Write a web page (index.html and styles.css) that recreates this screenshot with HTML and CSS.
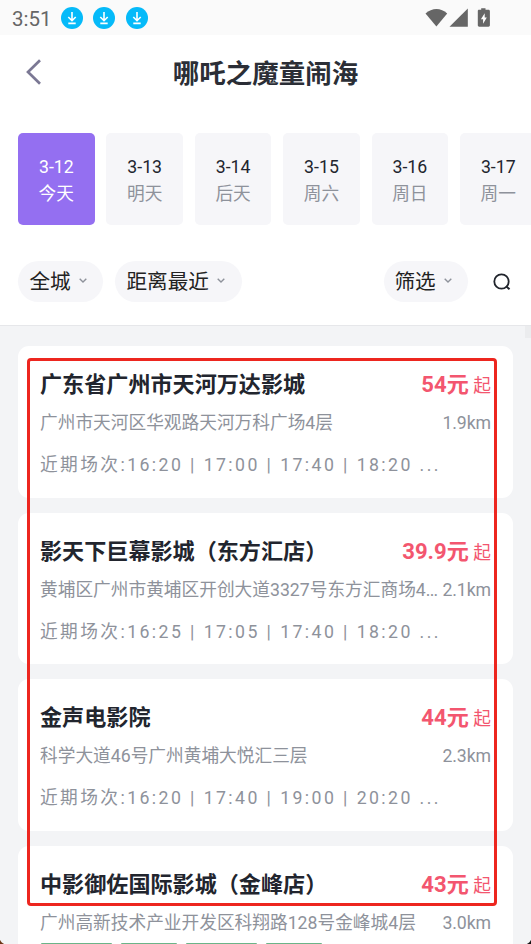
FILE: index.html
```
<!DOCTYPE html>
<html lang="zh-CN">
<head>
<meta charset="utf-8">
<title>哪吒之魔童闹海</title>
<link rel="stylesheet" href="styles.css">
</head>
<body>
<svg class="defs" width="0" height="0">
  <symbol id="download" viewBox="0 0 22 22"><circle cx="11" cy="11" r="11" fill="#05baf9"/><path d="M11 5v8.6M7.3 10l3.7 3.7 3.7-3.7M7.3 16.4h7.4" fill="none" stroke="#fff" stroke-width="1.6"/></symbol>
  <symbol id="chevron" viewBox="0 0 8 5"><path d="M.7.7 4 3.9 7.3.7" fill="none" stroke="#8e929b" stroke-width="1.4"/></symbol>
</svg>
<div class="screen">
  <header class="status">
    <span class="clock">3:51</span>
    <svg class="dl"><use href="#download"/></svg>
    <svg class="dl"><use href="#download"/></svg>
    <svg class="dl"><use href="#download"/></svg>
    <svg class="signals" viewBox="0 0 66 20"><g fill="#666"><path d="M.5 5.6C7-.6 16-.6 22.200 5.6L11.400 18.600z"/><path d="M42.800 .4v18.300H24.500z"/><path d="M53.800 1.800h2.400V.2h4.300v1.600h3c.8 0 1.400.6 1.400 1.400v14.100c0 .8-.6 1.400-1.400 1.400H54.200c-.8 0-1.400-.6-1.400-1.400V3.200c0-.8.400-1.400 1-1.400z"/></g><path d="M59.700 5.200 55.900 11.300h2.200v4.500l3.700-6.400h-2.100z" fill="#fff"/></svg>
  </header>
  <nav class="titlebar">
    <svg class="back" viewBox="0 0 16 26"><path d="M14 1.200 2 13l12 11.800" fill="none" stroke="#7b7894" stroke-width="2.700"/></svg>
    <h1>哪吒之魔童闹海</h1>
  </nav>
  <div class="dates">
    <div class="date active"><b>3-12</b><span>今天</span></div>
    <div class="date"><b>3-13</b><span>明天</span></div>
    <div class="date"><b>3-14</b><span>后天</span></div>
    <div class="date"><b>3-15</b><span>周六</span></div>
    <div class="date"><b>3-16</b><span>周日</span></div>
    <div class="date"><b>3-17</b><span>周一</span></div>
  </div>
  <div class="filters">
    <div class="pill city">全城<svg><use href="#chevron"/></svg></div>
    <div class="pill sort">距离最近<svg><use href="#chevron"/></svg></div>
    <div class="pill choose">筛选<svg><use href="#chevron"/></svg></div>
    <svg class="search" viewBox="0 0 18 18"><circle cx="8.500" cy="8.500" r="7.200" fill="none" stroke="#20242c" stroke-width="1.800"/><path d="m13.200 13.200 3.300 3.100" stroke="#20242c" stroke-width="2"/></svg>
  </div>
  <main class="list">
    <article class="card">
      <div class="row head"><h2>广东省广州市天河万达影城</h2><p class="price">54元<small>起</small></p></div>
      <div class="row addr"><span>广州市天河区华观路天河万科广场4层</span><span class="km">1.9km</span></div>
      <p class="times">近期场次:16:20 | 17:00 | 17:40 | 18:20 ...</p>
    </article>
    <article class="card">
      <div class="row head"><h2>影天下巨幕影城（东方汇店）</h2><p class="price">39.9元<small>起</small></p></div>
      <div class="row addr"><span>黄埔区广州市黄埔区开创大道3327号东方汇商场4<span class="dots">...</span></span><span class="km">2.1km</span></div>
      <p class="times">近期场次:16:25 | 17:05 | 17:40 | 18:20 ...</p>
    </article>
    <article class="card">
      <div class="row head"><h2>金声电影院</h2><p class="price">44元<small>起</small></p></div>
      <div class="row addr"><span>科学大道46号广州黄埔大悦汇三层</span><span class="km">2.3km</span></div>
      <p class="times">近期场次:16:20 | 17:40 | 19:00 | 20:20 ...</p>
    </article>
    <article class="card">
      <div class="row head"><h2>中影御佐国际影城（金峰店）</h2><p class="price">43元<small>起</small></p></div>
      <div class="row addr"><span>广州高新技术产业开发区科翔路128号金峰城4层</span><span class="km">3.0km</span></div>
      <div class="tags"><i class="wide"></i><i></i><i class="wide"></i><i></i></div>
    </article>
  </main>
  <div class="scroll"></div>
  <div class="outline"></div>
  <div class="corner left"></div>
  <div class="corner right"></div>
</div>
</body>
</html>
```
FILE: styles.css
```
* { box-sizing: border-box; margin: 0; padding: 0; }
body { background: #fff; font-family: Roboto, "Noto Sans CJK SC", sans-serif; }
.defs { position: absolute; }
.screen { position: relative; width: 531px; height: 944px; overflow: hidden; display: flex; flex-direction: column; }
.status { height: 35px; flex: none; background: #fafafa; display: flex; align-items: center; padding: 0 40px 0 12px; }
.clock { width: 48.500px; font-size: 20.500px; line-height: 36px; color: #666; padding-top: 2px; }
.dl { width: 22px; height: 22px; margin-right: 10.500px; }
.signals { width: 66px; height: 20px; margin-left: auto; }
.titlebar { height: 98px; flex: none; display: grid; grid-template-columns: 60px 1fr 60px; padding-top: 19px; align-items: start; }
.back { width: 16px; height: 26px; margin: 5px 0 0 26px; }
h1 { text-align: center; font-size: 26.500px; line-height: 40px; font-weight: 700; color: #2b2e36; }
.dates { flex: none; display: flex; gap: 11.800px; padding-left: 18px; height: 92px; }
.date { flex: none; width: 76.600px; border-radius: 5px; background: #f6f6f9; display: flex; flex-direction: column; align-items: center; padding-top: 21px; font-size: 17.700px; line-height: 27px; color: #8e929b; }
.date b { font-weight: 400; color: #22252e; }
.date.active { background: #946ff1; }
.date.active, .date.active b { color: #fff; }
.filters { flex: none; height: 100.500px; display: flex; align-items: flex-start; padding: 36px 19px 0 18px; border-bottom: 1px solid #e6e7ea; }
.pill { height: 41px; border-radius: 21px; background: #f6f6f9; display: flex; align-items: center; padding: 1px 0 0 11.500px; font-size: 20.600px; line-height: 42px; color: #222; }
.pill svg { width: 8px; height: 5px; margin: -4px 0 0 8px; }
.city { width: 85px; }
.sort { width: 127px; margin-left: 12px; }
.choose { width: 84px; margin-left: auto; padding-left: 10.500px; }
.search { width: 18px; height: 18px; margin: 12px 1px 0 25px; }
.list { flex: 1 0 618px; background: #f3f4f6; padding: 20.500px 18px 0; display: flex; flex-direction: column; gap: 15px; }
.card { flex: none; height: 151.700px; border-radius: 11px; background: #fff; padding: 18px 22px 0; }
.row { display: flex; justify-content: space-between; white-space: nowrap; }
.head { height: 40px; line-height: 40px; }
h2 { font-size: 22.100px; font-weight: 700; color: #22252e; }
.price { font-size: 22.100px; font-weight: 700; color: #f3566f; }
.price small { font-size: 17.700px; font-weight: 400; margin-left: 4.500px; }
.addr { height: 39px; line-height: 39.500px; font-size: 17.700px; color: #8e929b; }
.dots { letter-spacing: -.8px; }
.km { letter-spacing: -.1px; }
.times { height: 44px; line-height: 44.500px; font-size: 17.700px; letter-spacing: 2.420px; color: #8e929b; white-space: nowrap; }
.tags { display: flex; gap: 9px; margin: -.5px 0 0 .5px; }
.tags i { width: 56px; height: 20px; border-radius: 1px; background: #6bb488; }
.tags .wide { width: 71px; }
.scroll { position: absolute; left: 525px; top: 326px; width: 6px; height: 12px; background: #ebecee; }
.outline { position: absolute; left: 26.500px; top: 357.500px; width: 470px; height: 548px; border: 3px solid #ed261f; border-radius: 4px; }
.corner { position: absolute; bottom: 0; width: 7px; height: 7px; }
.left { left: 0; background: radial-gradient(circle at 100% 0, transparent 7px, #6b3515 8px); }
.right { right: 0; background: radial-gradient(circle at 0 0, transparent 7px, #111 8px); }
```
